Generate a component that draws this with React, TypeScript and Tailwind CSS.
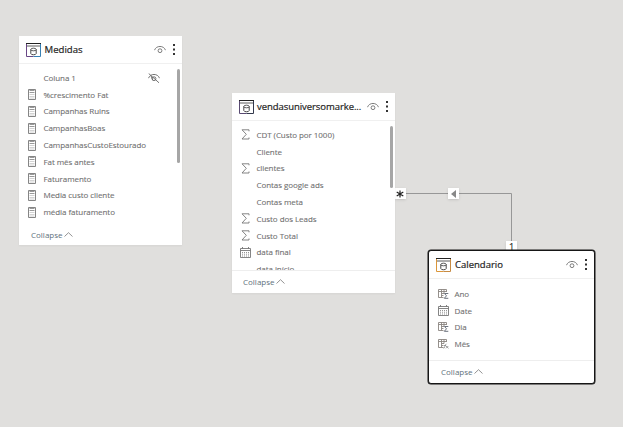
import type { ReactNode } from "react";

type IconKind = "calc" | "sigma" | "date" | "sum-table" | "fx-table" | "none";
type Field = { name: string; icon: IconKind; hidden?: boolean };

function TableIcon({ left, right }: { left: string; right: string }) {
  return (
    <svg width="15" height="14" viewBox="0 0 15 14" fill="none" className="shrink-0">
      <path d="M7.500 13.500H.5V0" stroke={left} />
      <path d="M7.500 13.500H14.500V0" stroke={right} />
      <path d="M0 .5H15" stroke="#222" />
      <path d="M1 3H14" stroke="#333" strokeWidth=".8" />
      <path d="M4.800 6.500V10.500C4.800 12.200 10.200 12.200 10.200 10.500V6.500" stroke="#333" strokeWidth=".9" />
      <ellipse cx="7.500" cy="6.500" rx="2.700" ry="1.300" stroke="#333" strokeWidth=".8" />
    </svg>
  );
}

function EyeIcon({ off = false }: { off?: boolean }) {
  return (
    <svg width="12" height="10" viewBox="0 0 12 10" fill="none" stroke={off ? "#666" : "#6f6f6f"} strokeWidth=".9" className="shrink-0">
      <path d="M.5 5.200C2.200 .2 9.800 .2 11.500 5.200" />
      <circle cx="6" cy="5.700" r="1.900" />
      {off && <path d="M.7 .5L11 9.800M3 3L4.800 7.200" />}
    </svg>
  );
}

function DotsIcon() {
  return (
    <svg width="2" height="11" viewBox="0 0 2 11" fill="#333" className="shrink-0">
      <path d="M0 0h2v2H0zM0 4.500h2v2H0zM0 9h2v2H0z" />
    </svg>
  );
}

function FieldIcon({ kind }: { kind: IconKind }) {
  if (kind === "calc")
    return (
      <svg width="8" height="11" viewBox="0 0 8 11" fill="none">
        <path d="M.5.500h7v10h-7z" stroke="#858585" />
        <path d="M1.500 1.500h5M1.500 3.500h5" stroke="#999" />
        <path d="M1.500 5.500h5M1.500 7.500h5M1.500 9h5" stroke="#c8c8c8" strokeWidth=".8" />
      </svg>
    );
  if (kind === "sigma")
    return (
      <svg width="9" height="11" viewBox="0 0 9 11" fill="none" stroke="#777" strokeWidth=".9">
        <path d="M8 2.300V.8H1L5.300 5.300L1 10H8V8.500" />
      </svg>
    );
  if (kind === "date")
    return (
      <svg width="11" height="11" viewBox="0 0 11 11" fill="none">
        <path d="M.5 1.500h10v9H.5zM.5 3.500h10M2.500 0v2M8.500 0v2" stroke="#777" strokeWidth=".9" />
        <path d="M2 5.500h7M2 7.200h7M2 9h7" stroke="#888" strokeWidth=".9" strokeDasharray="1 1" />
      </svg>
    );
  if (kind === "sum-table" || kind === "fx-table")
    return (
      <svg width="11" height="10" viewBox="0 0 11 10" fill="none">
        <path d="M5.500 8.500H.5V.5h8V3M.5 2.500h8M3.500 .5v8M3.500 4.500H6M3.500 6.500H5.500M6 .5v4" stroke="#8a8580" strokeWidth=".9" />
        {kind === "sum-table" ? (
          <path d="M10.300 4.500H6.500L8.500 6.800L6.300 9.300H10.300" stroke="#59616d" strokeWidth=".9" />
        ) : (
          <path d="M5.500 9.300Q6.500 9.300 6.800 7.500T8.500 4.800M6 6.500h2M8 7L10.500 9.300M10.300 7L8 9.300" stroke="#858585" strokeWidth=".8" />
        )}
      </svg>
    );
  return null;
}

function FieldRow({ field }: { field: Field }) {
  return (
    <li className="flex h-[16.8px] shrink-0 items-center">
      <span className="flex w-[11px] shrink-0 justify-center">
        <FieldIcon kind={field.icon} />
      </span>
      <span className="ml-[6px] grow whitespace-nowrap text-[8px] leading-none tracking-[-0.06px] text-[#6f6f6f] [-webkit-text-stroke:0.1px_#6f6f6f]">{field.name}</span>
      {field.hidden && <span className="mr-[22px]"><EyeIcon off /></span>}
    </li>
  );
}

function TableCard({ title, colors, fields, className, listClass, titleClass, footerClass, thumb }: {
  title: string;
  colors: [string, string];
  fields: Field[];
  className: string;
  listClass: string;
  titleClass: string;
  footerClass: string;
  thumb?: ReactNode;
}) {
  return (
    <section className={`absolute flex flex-col overflow-hidden bg-white ${className}`}>
      <header className="flex h-[28px] shrink-0 items-center border-b border-[#f0f0f0] pl-[7px] pr-[7px]">
        <TableIcon left={colors[0]} right={colors[1]} />
        <h2 className={`min-w-0 grow whitespace-nowrap font-medium leading-[14px] text-[#252423] [-webkit-text-stroke:0.2px_#252423] ${titleClass}`}>{title}</h2>
        <span className="mr-[7px]"><EyeIcon /></span>
        <DotsIcon />
      </header>
      <div className="flex min-h-0 grow">
        <ul className={`min-w-0 grow overflow-hidden ${listClass}`}>
          {fields.map((f) => <FieldRow key={f.name} field={f} />)}
        </ul>
        {thumb}
      </div>
      <footer className={`flex shrink-0 items-center text-[8px] leading-none text-[#60717c] ${footerClass}`}>
        Collapse
        <svg width="9" height="5" viewBox="0 0 9 5" fill="none" className="mb-px ml-px">
          <path d="M.5 4.500L4.500 .7L8.500 4.500" stroke="#777" strokeWidth=".8" />
        </svg>
      </footer>
    </section>
  );
}

const measures: Field[] = [
  { name: "Coluna 1", icon: "none", hidden: true },
  { name: "%crescimento Fat", icon: "calc" },
  { name: "Campanhas Ruins", icon: "calc" },
  { name: "CampanhasBoas", icon: "calc" },
  { name: "CampanhasCustoEstourado", icon: "calc" },
  { name: "Fat mês antes", icon: "calc" },
  { name: "Faturamento", icon: "calc" },
  { name: "Media custo cliente", icon: "calc" },
  { name: "média faturamento", icon: "calc" },
];

const sales: Field[] = [
  { name: "CDT (Custo por 1000)", icon: "sigma" },
  { name: "Cliente", icon: "none" },
  { name: "clientes", icon: "sigma" },
  { name: "Contas google ads", icon: "none" },
  { name: "Contas meta", icon: "none" },
  { name: "Custo dos Leads", icon: "sigma" },
  { name: "Custo Total", icon: "sigma" },
  { name: "data final", icon: "date" },
  { name: "data início", icon: "none" },
];

const calendar: Field[] = [
  { name: "Ano", icon: "sum-table" },
  { name: "Date", icon: "date" },
  { name: "Dia", icon: "sum-table" },
  { name: "Mês", icon: "fx-table" },
];

export default function App() {
  return (
    <main className="relative h-[427px] w-[623px] overflow-hidden bg-[#e0dfdd] font-['Open_Sans','Noto_Sans',sans-serif]">
      <svg width="623" height="427" viewBox="0 0 623 427" fill="none" className="absolute inset-0">
        <path d="M395 193.500H511.500V250" stroke="#979797" />
      </svg>
      <span className="absolute left-[395px] top-[188px] flex h-[11px] w-[11px] items-center justify-center bg-white pr-px shadow-sm">
        <svg width="8" height="8" viewBox="0 0 8 8" stroke="#222" strokeWidth="1.200">
          <path d="M4 .5v7M.7 2L7.300 6M7.300 2L.7 6" />
        </svg>
      </span>
      <span className="absolute left-[448px] top-[188px] flex h-[11px] w-[11px] items-center justify-center bg-white shadow-sm">
        <svg width="5" height="8" viewBox="0 0 5 8" fill="#888"><path d="M5 0v8L0 4z" /></svg>
      </span>
      <span className="absolute left-[506px] top-[241px] flex h-[11px] w-[11px] items-center justify-center bg-white text-[10px] leading-none text-[#222] shadow-sm">1</span>

      <TableCard
        title="Medidas"
        colors={["#694786", "#3681b5"]}
        fields={measures}
        className="left-[19px] top-[36px] h-[209px] w-[163px] shadow-xs"
        listClass="pl-[7.500px] pt-[5.500px]"
        titleClass="ml-[3.500px] text-[9.600px]"
        footerClass="h-[20px] pl-[12px]"
        thumb={<div className="ml-[-5px] mr-[2px] mt-[5px] h-[94px] w-[3px] rounded-full bg-[#a6a6a6]" />}
      />
      <TableCard
        title="vendasuniversomarke..."
        colors={["#594a72", "#33394c"]}
        fields={sales}
        className="left-[232px] top-[93px] h-[200px] w-[163px] shadow-xs"
        listClass="pl-[7.500px] pt-[5.500px]"
        titleClass="ml-[3px] text-[9.500px] tracking-[-0.06px]"
        footerClass="h-[23px] border-t border-[#eee] pl-[11px]"
        thumb={<div className="ml-[-5px] mr-[2px] mt-[5px] h-[62px] w-[3px] rounded-full bg-[#a6a6a6]" />}
      />
      <TableCard
        title="Calendario"
        colors={["#db963a", "#c68a43"]}
        fields={calendar}
        className="left-[428px] top-[250px] h-[134px] w-[167px] rounded-[3px] border border-[#161616] shadow-[0_0_0_0.5px_#161616]"
        listClass="pl-[8.500px] pt-[6.500px]"
        titleClass="ml-[4px] text-[9.500px]"
        footerClass="h-[23px] border-t border-[#eee] pl-[12px]"
      />
    </main>
  );
}
